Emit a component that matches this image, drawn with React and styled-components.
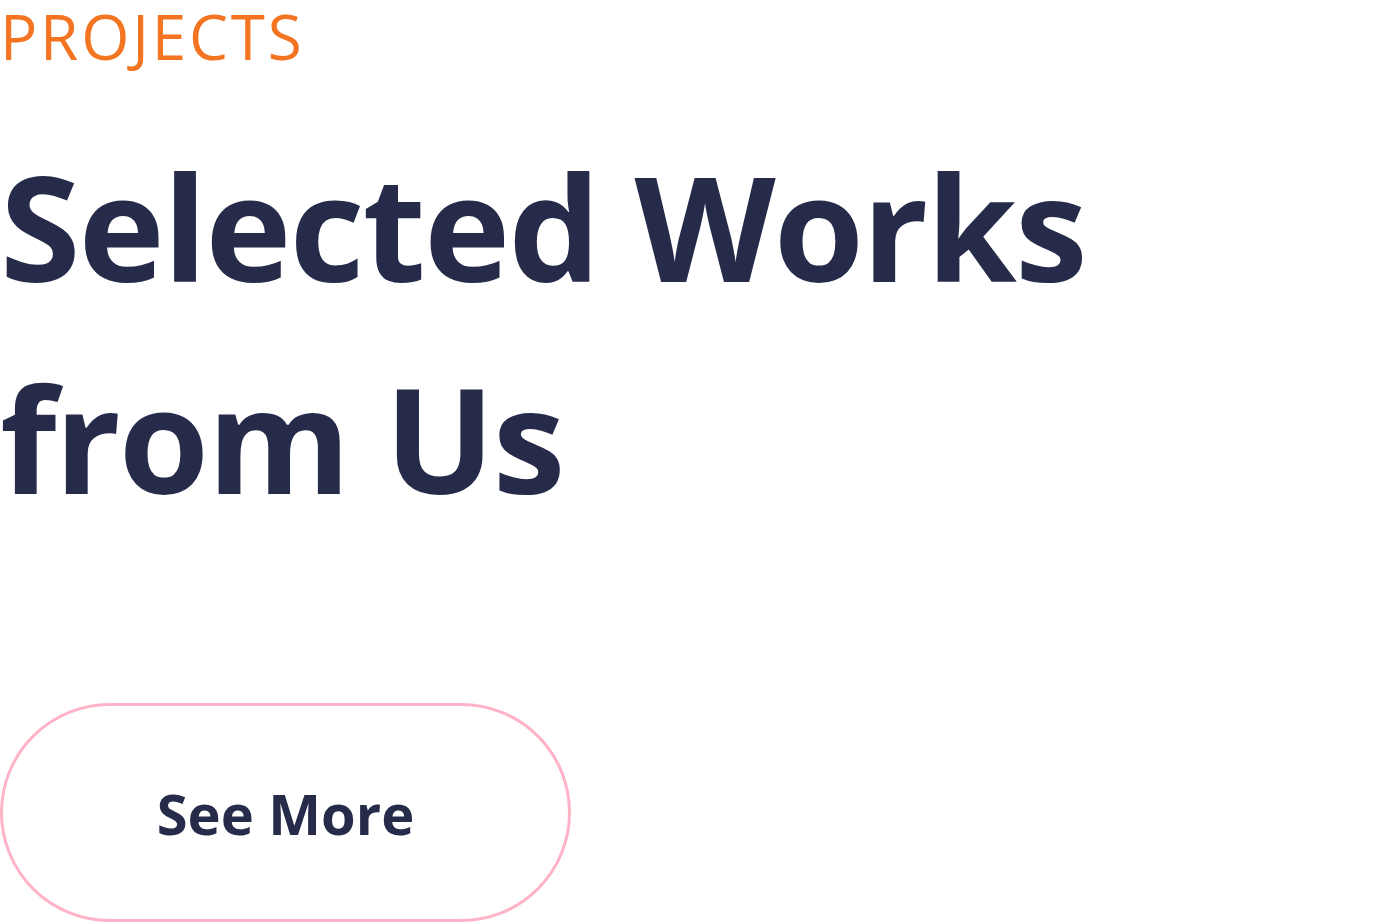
import styled, { createGlobalStyle } from "styled-components";

const GlobalStyle = createGlobalStyle`
  body {
    margin: 0;
    background: #ffffff;
    font-family: "Open Sans", "Noto Sans", sans-serif;
  }
`;

const Section = styled.section`
  display: flex;
  flex-direction: column;
  align-items: flex-start;
  width: 1400px;
`;

const Eyebrow = styled.span`
  font-size: 62px;
  font-weight: 400;
  line-height: 72px;
  color: #f37421;
  letter-spacing: 2.8px;
`;

const Heading = styled.h2`
  margin: 48px 0 0;
  font-size: 146px;
  font-weight: 700;
  line-height: 212px;
  color: #272b4a;
  letter-spacing: -2px;
`;

const Button = styled.button`
  margin-top: 159px;
  width: 571px;
  height: 219px;
  border: 3px solid #ffb3c6;
  border-radius: 110px;
  background: #ffffff;
  font-family: inherit;
  font-size: 56px;
  font-weight: 700;
  color: #272b4a;
  letter-spacing: 0;
  cursor: pointer;
`;

const App = () => {
  return (
    <>
      <GlobalStyle />
      <Section>
        <Eyebrow>PROJECTS</Eyebrow>
        <Heading>
          Selected Works
          <br />
          from Us
        </Heading>
        <Button>See More</Button>
      </Section>
    </>
  );
};

export default App;
